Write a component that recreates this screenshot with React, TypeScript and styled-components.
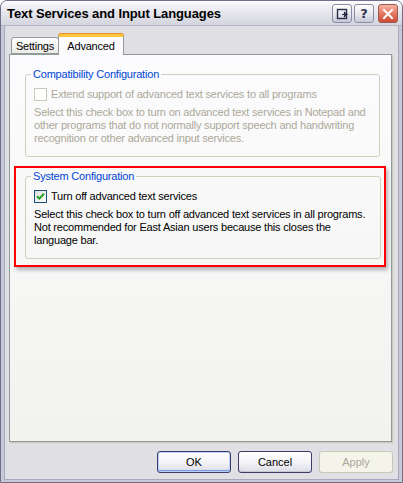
import styled, { createGlobalStyle } from 'styled-components';

const GlobalStyle = createGlobalStyle`
    html, body {
        margin: 0;
        padding: 0;
        background: #ffffff;
    }
    * {
        box-sizing: border-box;
    }
`;

const UI_FONT = `"Liberation Sans", Arial, sans-serif`;

export default function App() {
    return (
        <>
            <GlobalStyle />
            <Window>
                <TitleBar>
                    <Title>Text Services and Input Languages</Title>
                    <TitleButtons>
                        <CaptionButton aria-label="Language bar">
                            <svg width="13" height="12" viewBox="0 0 13 12">
                                <rect x="1.5" y="1.5" width="9" height="9" fill="none" stroke="#2e2e4a" strokeWidth="1.4" />
                                <path d="M6 6.5h4M8.5 4.5l2.5 2-2.5 2z" stroke="#2e2e4a" strokeWidth="1.2" fill="#2e2e4a" />
                            </svg>
                        </CaptionButton>
                        <CaptionButton aria-label="Help">
                            <HelpGlyph>?</HelpGlyph>
                        </CaptionButton>
                        <CloseButton aria-label="Close">
                            <svg width="12" height="12" viewBox="0 0 12 12">
                                <path d="M2 2L10 10M10 2L2 10" stroke="#ffffff" strokeWidth="2" strokeLinecap="square" />
                            </svg>
                        </CloseButton>
                    </TitleButtons>
                </TitleBar>

                <Body>
                    <TabStrip>
                        <Tab $width={48}>Settings</Tab>
                        <Tab $width={66} $active>Advanced</Tab>
                    </TabStrip>

                    <Panel>
                        <GroupBox>
                            <Legend>Compatibility Configuration</Legend>
                            <CheckRow $disabled>
                                <CheckBox $disabled />
                                Extend support of advanced text services to all programs
                            </CheckRow>
                            <Description $disabled>
                                Select this check box to turn on advanced text services in Notepad and<br />
                                other programs that do not normally support speech and handwriting<br />
                                recognition or other advanced input services.
                            </Description>
                        </GroupBox>

                        <Highlight>
                            <GroupBox>
                                <Legend>System Configuration</Legend>
                                <CheckRow>
                                    <CheckBox>
                                        <svg width="9" height="9" viewBox="0 0 9 9">
                                            <path d="M1 4.2L3.4 6.6L8 1.8" stroke="#21a121" strokeWidth="2" fill="none" />
                                        </svg>
                                    </CheckBox>
                                    Turn off advanced text services
                                </CheckRow>
                                <Description>
                                    Select this check box to turn off advanced text services in all programs.<br />
                                    Not recommended for East Asian users because this closes the<br />
                                    language bar.
                                </Description>
                            </GroupBox>
                        </Highlight>
                    </Panel>

                    <ButtonRow>
                        <PushButton $default>OK</PushButton>
                        <PushButton>Cancel</PushButton>
                        <PushButton disabled>Apply</PushButton>
                    </ButtonRow>
                </Body>
            </Window>
        </>
    );
}

const Window = styled.div`
    width: 403px;
    height: 483px;
    display: flex;
    flex-direction: column;
    border: 1px solid #6f6f8c;
    border-radius: 7px 7px 0 0;
    background: #c8c8d6;
    font-family: ${UI_FONT};
    font-size: 11px;
    letter-spacing: -0.2px;
    overflow: hidden;
`;

const TitleBar = styled.div`
    height: 25px;
    flex: none;
    display: flex;
    align-items: center;
    justify-content: space-between;
    padding: 0 4px 0 6px;
    background: linear-gradient(#ffffff 0%, #f0f0f5 20%, #e2e2ea 60%, #d4d4de 100%);
    border-bottom: 1px solid #b4b4c4;
`;

const Title = styled.span`
    font-family: ${UI_FONT};
    font-weight: bold;
    font-size: 13px;
    color: #000000;
    letter-spacing: -0.1px;
`;

const TitleButtons = styled.div`
    display: flex;
    gap: 2px;
    margin-top: 1px;
`;

const CaptionButton = styled.button`
    width: 20px;
    height: 19px;
    padding: 0;
    display: flex;
    align-items: center;
    justify-content: center;
    border: 1px solid #8c8ca6;
    border-radius: 3px;
    background: linear-gradient(#ffffff 0%, #e8e8f0 50%, #c8c8d8 100%);
`;

const HelpGlyph = styled.span`
    font-family: "DejaVu Sans", sans-serif;
    font-weight: bold;
    font-size: 13px;
    color: #33334f;
    line-height: 1;
`;

const CloseButton = styled(CaptionButton)`
    margin-left: 2px;
    border-color: #9c5a50;
    background: linear-gradient(#f6b4a4 0%, #e77c66 45%, #cf4a32 100%);
`;

const Body = styled.div`
    flex: 1;
    display: flex;
    flex-direction: column;
    margin: 0 3px 3px 3px;
    padding: 8px 6px 6px 4px;
    background: #e0dfe3;
    border: 1px solid #a8a8bc;
    border-top: none;
`;

const TabStrip = styled.div`
    display: flex;
    align-items: flex-end;
    padding-left: 2px;
    height: 20px;
    position: relative;
    z-index: 1;
`;

const Tab = styled.div<{ $active?: boolean; $width: number }>`
    width: ${p => p.$width}px;
    display: flex;
    align-items: center;
    justify-content: center;
    height: ${p => (p.$active ? '21px' : '17px')};
    margin-bottom: ${p => (p.$active ? '-1px' : '0')};
    padding-top: ${p => (p.$active ? '0' : '1px')};
    color: #000000;
    border: 1px solid #919b9c;
    border-bottom: ${p => (p.$active ? 'none' : '1px solid #919b9c')};
    border-top: ${p => (p.$active ? '3px solid #ffc83c' : '1px solid #919b9c')};
    border-radius: 3px 3px 0 0;
    background: ${p => (p.$active ? '#fcfcfe' : 'linear-gradient(#ffffff, #ecebe6)')};
    box-shadow: ${p => (p.$active ? '0 -1px 0 #e68b2c' : 'none')};
    margin-left: ${p => (p.$active ? '-1px' : '0')};
`;

const Panel = styled.div`
    height: 388px;
    display: flex;
    flex-direction: column;
    padding: 13px 0 0 0;
    border: 1px solid #919b9c;
    background: linear-gradient(#fcfcfe 0%, #f6f6f5 60%, #f2f2ef 100%);
    box-shadow: 1px 1px 0 #c8c8bc, 2px 2px 0 #dcdcd2;
`;

const GroupBox = styled.fieldset`
    margin: 0 11px 0 15px;
    padding: 0 8px 11px 8px;
    border: 1px solid #d0d0bf;
    border-radius: 3px;
    min-width: 0;
`;

const Legend = styled.legend`
    padding: 0 2px;
    margin-left: -3px;
    line-height: 13px;
    color: #0046d5;
`;

const CheckRow = styled.label<{ $disabled?: boolean }>`
    display: flex;
    align-items: center;
    gap: 4px;
    margin-top: 7px;
    height: 13px;
    line-height: 13px;
    color: ${p => (p.$disabled ? '#aca899' : '#000000')};
    white-space: nowrap;
`;

const CheckBox = styled.span<{ $disabled?: boolean }>`
    width: 13px;
    height: 13px;
    flex: none;
    display: flex;
    align-items: center;
    justify-content: center;
    border: 1px solid ${p => (p.$disabled ? '#cac8bb' : '#1c5180')};
    background: ${p => (p.$disabled ? '#ffffff' : 'linear-gradient(135deg, #dcdcd7, #ffffff)')};
`;

const Description = styled.p<{ $disabled?: boolean }>`
    margin: 5px 0 0 0;
    line-height: 13px;
    color: ${p => (p.$disabled ? '#aca899' : '#000000')};
    white-space: nowrap;
`;

const Highlight = styled.div`
    margin: 9px 5px 0 4px;
    padding: 2px 3px 6px 9px;
    border: 2px solid #ff0000;
    box-shadow: 2px 3px 4px rgba(0, 0, 0, 0.28);
    & > fieldset {
        margin: 0;
    }
`;

const ButtonRow = styled.div`
    display: flex;
    justify-content: flex-end;
    gap: 7px;
    margin-top: 9px;
    margin-right: -1px;
`;

const PushButton = styled.button<{ $default?: boolean }>`
    width: 74px;
    height: 22px;
    padding: 0;
    font-family: ${UI_FONT};
    font-size: 11px;
    color: #000000;
    border: 1px solid #3c3c6a;
    border-radius: 3px;
    background: linear-gradient(#ffffff 0%, #f4f4f8 50%, #dcdce6 100%);
    box-shadow: ${p => (p.$default ? 'inset 0 0 0 1px #b8d0f8, inset 0 -1px 0 1px #7a9ae8' : 'inset 0 -1px 0 #c8c8d4')};

    &:disabled {
        color: #aca899;
        border-color: #c9c7ba;
        background: #f5f4ea;
        box-shadow: none;
    }
`;
